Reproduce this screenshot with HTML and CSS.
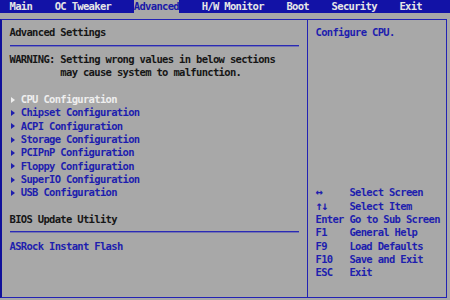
FILE: index.html
```html
<!DOCTYPE html>
<html lang="en">
  <head>
    <meta charset="UTF-8" />
    <meta name="viewport" content="width=device-width, initial-scale=1.0" />
    <title>BIOS Setup - Advanced</title>
    <link rel="stylesheet" href="styles.css">
  </head>
  <body>
    <div class="bios">
      <!-- top menu -->
      <div class="menubar">
        <span class="tab">Main</span>
        <span class="tab">OC Tweaker</span>
        <span class="tab active">Advanced</span>
        <span class="tab">H/W Monitor</span>
        <span class="tab">Boot</span>
        <span class="tab">Security</span>
        <span class="tab">Exit</span>
      </div>

      <div class="frame">
        <!-- left: settings -->
        <div class="main">
          <div class="row head">Advanced Settings</div>
          <div class="rule"></div>
          <div class="row head">WARNING: Setting wrong values in below sections</div>
          <div class="row head">         may cause system to malfunction.</div>
          <div class="row"></div>
          <ul class="menu">
            <li class="row selected">CPU Configuration</li>
            <li class="row">Chipset Configuration</li>
            <li class="row">ACPI Configuration</li>
            <li class="row">Storage Configuration</li>
            <li class="row">PCIPnP Configuration</li>
            <li class="row">Floppy Configuration</li>
            <li class="row">SuperIO Configuration</li>
            <li class="row">USB Configuration</li>
          </ul>
          <div class="row"></div>
          <div class="row head">BIOS Update Utility</div>
          <div class="rule"></div>
          <div class="row link">ASRock Instant Flash</div>
        </div>

        <!-- right: help -->
        <div class="side">
          <div class="row link">Configure CPU.</div>
          <div class="keys">
            <span class="row arrow">&harr;</span><span class="row">Select Screen</span>
            <span class="row arrow">&uarr;&darr;</span><span class="row">Select Item</span>
            <span class="row">Enter</span><span class="row">Go to Sub Screen</span>
            <span class="row">F1</span><span class="row">General Help</span>
            <span class="row">F9</span><span class="row">Load Defaults</span>
            <span class="row">F10</span><span class="row">Save and Exit</span>
            <span class="row">ESC</span><span class="row">Exit</span>
          </div>
        </div>
      </div>
    </div>
  </body>
</html>
```

FILE: styles.css
```css
body {
  margin: 0;
  padding: 0;
  background: #a8a8a8;
}
.bios {
  width: 450px;
  height: 300px;
  display: flex;
  flex-direction: column;
  background: #a8a8a8;
  font-family: "DejaVu Sans Mono", "Liberation Mono", monospace;
  font-weight: bold;
  font-size: 10.5px;
  letter-spacing: -0.67px;
  color: #161616;
  overflow: hidden;
}
.menubar {
  height: 13px;
  line-height: 13px;
  background: #1212a6;
  color: #e6e6e6;
  padding-left: 9.5px;
  display: flex;
  gap: 22.6px;
  white-space: pre;
}
.tab.active {
  background: #a8a8a8;
  color: #1a1aa8;
}
.frame {
  flex: 1;
  display: flex;
  margin: 6px 3px 2px 0;
  border: 1px solid #2222b4;
  border-left: 2px solid #10109a;
}
.main {
  width: 289px;
  padding: 6.33px 8px 0 7.5px;
  border-right: 1px solid #2222b4;
}
.side {
  flex: 1;
  display: flex;
  flex-direction: column;
  padding: 6.33px 4px 17.5px 8px;
}
.row {
  display: block;
  height: 13.33px;
  line-height: 13.33px;
  white-space: pre;
}
.rule {
  height: 1px;
  background: #2a2ab4;
  box-shadow: 0 1px 0 #7676b0;
  margin: 5px 0 7.33px;
}
.link {
  color: #1e1eae;
}
.menu {
  list-style: none;
  margin: 0;
  padding: 0;
}
.menu li {
  position: relative;
  padding-left: 11.3px;
  color: #1e1eae;
}
.menu li::before {
  content: "";
  position: absolute;
  left: 1.5px;
  top: 3.8px;
  border-left: 4px solid #1e1eae;
  border-top: 3px solid transparent;
  border-bottom: 3px solid transparent;
}
.menu li.selected {
  color: #eeeeee;
}
.menu li.selected::before {
  border-left-color: #eeeeee;
}
.keys {
  margin-top: auto;
  display: grid;
  grid-template-columns: 33.9px 1fr;
  color: #1e1eae;
}
.keys .arrow {
  font-size: 12px;
  letter-spacing: -1.5px;
}
```
